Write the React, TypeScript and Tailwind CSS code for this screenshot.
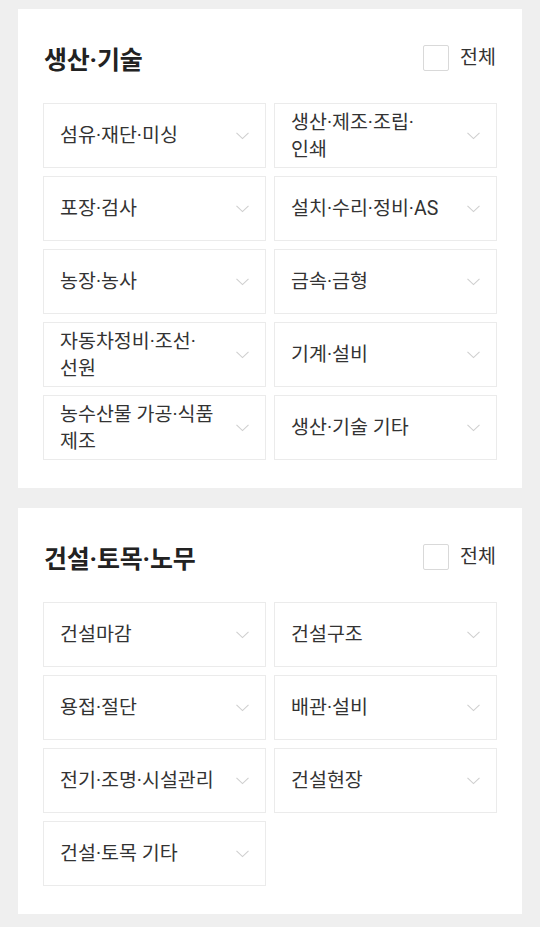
import React from "react";

type Section = { title: string; items: string[] };

const sections: Section[] = [
  {
    title: "생산·기술",
    items: [
      "섬유·재단·미싱",
      "생산·제조·조립·인쇄",
      "포장·검사",
      "설치·수리·정비·AS",
      "농장·농사",
      "금속·금형",
      "자동차정비·조선·선원",
      "기계·설비",
      "농수산물 가공·식품 제조",
      "생산·기술 기타",
    ],
  },
  {
    title: "건설·토목·노무",
    items: [
      "건설마감",
      "건설구조",
      "용접·절단",
      "배관·설비",
      "전기·조명·시설관리",
      "건설현장",
      "건설·토목 기타",
    ],
  },
];

function Chevron() {
  return (
    <svg width="13" height="8" viewBox="0 0 13 8" className="shrink-0" fill="none">
      <path d="M0.5 0.8 L6.5 6.6 L12.5 0.8" stroke="#cfcfcf" strokeWidth="1.1" />
    </svg>
  );
}

function Card({ section }: { section: Section }) {
  return (
    <div className="bg-white mx-[18px] pt-[36px] pb-[28px] px-[25px]">
      <div className="flex items-start justify-between mb-[26px]">
        <h2 className="text-[25px] leading-[32px] font-bold text-[#222] pl-[1px] tracking-[-0.2px]">
          {section.title}
        </h2>
        <label className="flex items-center h-[26px] mr-[1px]">
          <span className="w-[26px] h-[26px] border border-[#d9d9d9] rounded-[2px] bg-white" />
          <span className="ml-[11px] text-[19.5px] text-[#333] leading-[26px] -mt-[1px]">전체</span>
        </label>
      </div>
      <div className="grid grid-cols-2 gap-[8px]">
        {section.items.map((it) => (
          <div
            key={it}
            className="h-[65px] border border-[#ebebeb] flex items-center pl-[16px] pr-[16px]"
          >
            <span className="w-[156px] text-[19.5px] leading-[27px] text-[#333] [word-break:keep-all]">
              {it}
            </span>
            <span className="ml-auto flex items-center">
              <Chevron />
            </span>
          </div>
        ))}
      </div>
    </div>
  );
}

export default function App() {
  return (
    <div
      className="bg-[#efefef] min-h-[927px] pt-[9px] flex flex-col gap-[20px]"
      style={{ fontFamily: 'Roboto, "Noto Sans CJK KR", "Noto Sans", sans-serif' }}
    >
      {sections.map((s) => (
        <Card key={s.title} section={s} />
      ))}
    </div>
  );
}
